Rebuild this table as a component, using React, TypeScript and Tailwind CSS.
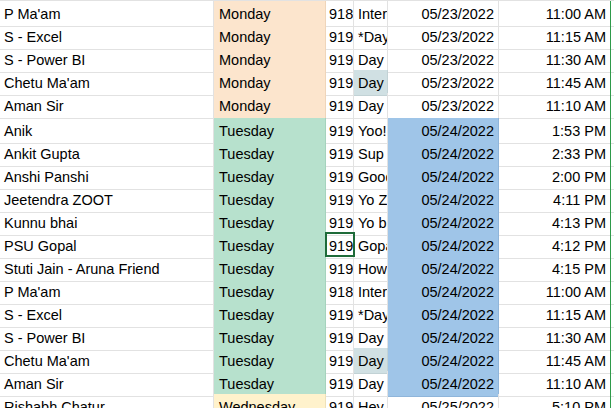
import React from 'react';

type Row = {
  name: string;
  day: 'Monday' | 'Tuesday' | 'Wednesday';
  phone: string;
  msg: string;
  date: string;
  time: string;
  blue?: boolean;
  tint?: boolean;
  selected?: boolean;
  tall?: boolean;
};

const rows: Row[] = [
  { name: "P Ma'am", day: 'Monday', phone: '918826401245', msg: 'Interview', date: '05/23/2022', time: '11:00 AM' },
  { name: 'S - Excel', day: 'Monday', phone: '919414728361', msg: '*Day 1*', date: '05/23/2022', time: '11:15 AM' },
  { name: 'S - Power BI', day: 'Monday', phone: '919414728361', msg: 'Day 2', date: '05/23/2022', time: '11:30 AM' },
  { name: "Chetu Ma'am", day: 'Monday', phone: '919829011634', msg: 'Day 3', date: '05/23/2022', time: '11:45 AM', tint: true },
  { name: 'Aman Sir', day: 'Monday', phone: '919983324171', msg: 'Day 4', date: '05/23/2022', time: '11:10 AM', tall: true },
  { name: 'Anik', day: 'Tuesday', phone: '919461538820', msg: 'Yoo!', date: '05/24/2022', time: '1:53 PM', blue: true },
  { name: 'Ankit Gupta', day: 'Tuesday', phone: '919828145509', msg: 'Sup bro', date: '05/24/2022', time: '2:33 PM', blue: true },
  { name: 'Anshi Panshi', day: 'Tuesday', phone: '919672330178', msg: 'Good afternoon', date: '05/24/2022', time: '2:00 PM', blue: true },
  { name: 'Jeetendra ZOOT', day: 'Tuesday', phone: '919414620937', msg: 'Yo Zoot', date: '05/24/2022', time: '4:11 PM', blue: true },
  { name: 'Kunnu bhai', day: 'Tuesday', phone: '919784402716', msg: 'Yo bhai', date: '05/24/2022', time: '4:13 PM', blue: true },
  { name: 'PSU Gopal', day: 'Tuesday', phone: '919636218840', msg: 'Gopal', date: '05/24/2022', time: '4:12 PM', blue: true, selected: true },
  { name: 'Stuti Jain - Aruna Friend', day: 'Tuesday', phone: '919887512604', msg: 'How are you', date: '05/24/2022', time: '4:15 PM', blue: true },
  { name: "P Ma'am", day: 'Tuesday', phone: '918826401245', msg: 'Interview', date: '05/24/2022', time: '11:00 AM', blue: true },
  { name: 'S - Excel', day: 'Tuesday', phone: '919414728361', msg: '*Day 1*', date: '05/24/2022', time: '11:15 AM', blue: true },
  { name: 'S - Power BI', day: 'Tuesday', phone: '919414728361', msg: 'Day 2', date: '05/24/2022', time: '11:30 AM', blue: true },
  { name: "Chetu Ma'am", day: 'Tuesday', phone: '919829011634', msg: 'Day 3', date: '05/24/2022', time: '11:45 AM', blue: true, tint: true },
  { name: 'Aman Sir', day: 'Tuesday', phone: '919983324171', msg: 'Day 4', date: '05/24/2022', time: '11:10 AM', blue: true },
  { name: 'Rishabh Chatur', day: 'Wednesday', phone: '919352110487', msg: 'Hey', date: '05/25/2022', time: '5:10 PM' },
];

const dayClass = {
  Monday: 'bg-[#fce5cd] border-[#efd5ba]',
  Tuesday: 'bg-[#b7e1cd] border-[#a5d3bd]',
  Wednesday: 'bg-[#fff2cc] border-[#efe1b9]',
};

// cells clip their text like a sheet does
const cell = 'flex items-center pt-[3px] overflow-hidden whitespace-nowrap border-r border-b';

export default function App() {
  return (
    <div
      className="w-[614px] h-[408px] overflow-hidden bg-white text-black text-[14.5px] border-t border-[#e2e2e2]"
      style={{ fontFamily: '"Liberation Sans", Arial, sans-serif' }}
    >
      {rows.map((r, i) => (
        <div
          key={i}
          className={`grid grid-cols-[214px_112px_28px_34px_111px_111px_1px_1fr] ${r.tall ? 'h-[25px]' : 'h-[23px]'}`}
        >
          <div className={`${cell} px-[4px] border-[#e2e2e2]`}>{r.name}</div>
          <div className={`${cell} px-[5px] ${dayClass[r.day]}`}>{r.day}</div>
          <div className="relative flex border-r border-b border-[#e2e2e2]">
            <div className="flex items-center pt-[3px] pl-[3px] w-full overflow-hidden whitespace-nowrap">{r.phone}</div>
            {r.selected && (
              <div className="absolute -left-[1px] -top-[1px] w-[30px] h-[25px] z-10 border-2 border-[#1e6b39]" />
            )}
          </div>
          <div className={`${cell} pl-[4px] ${r.tint ? 'bg-[#d0e0e3] border-[#c2d2d5]' : 'border-[#e2e2e2]'}`}>
            {r.msg}
          </div>
          <div
            className={`${cell} justify-end pr-[4px] ${r.blue ? 'bg-[#9fc5e8] border-[#8fb5da]' : 'border-[#e2e2e2]'}`}
          >
            {r.date}
          </div>
          <div className={`${cell} justify-end pr-[4px] border-r-0 border-[#e2e2e2]`}>{r.time}</div>
          <div className="bg-[#2e9a4a]" />
          <div className="border-b border-[#e2e2e2]" />
        </div>
      ))}
    </div>
  );
}
